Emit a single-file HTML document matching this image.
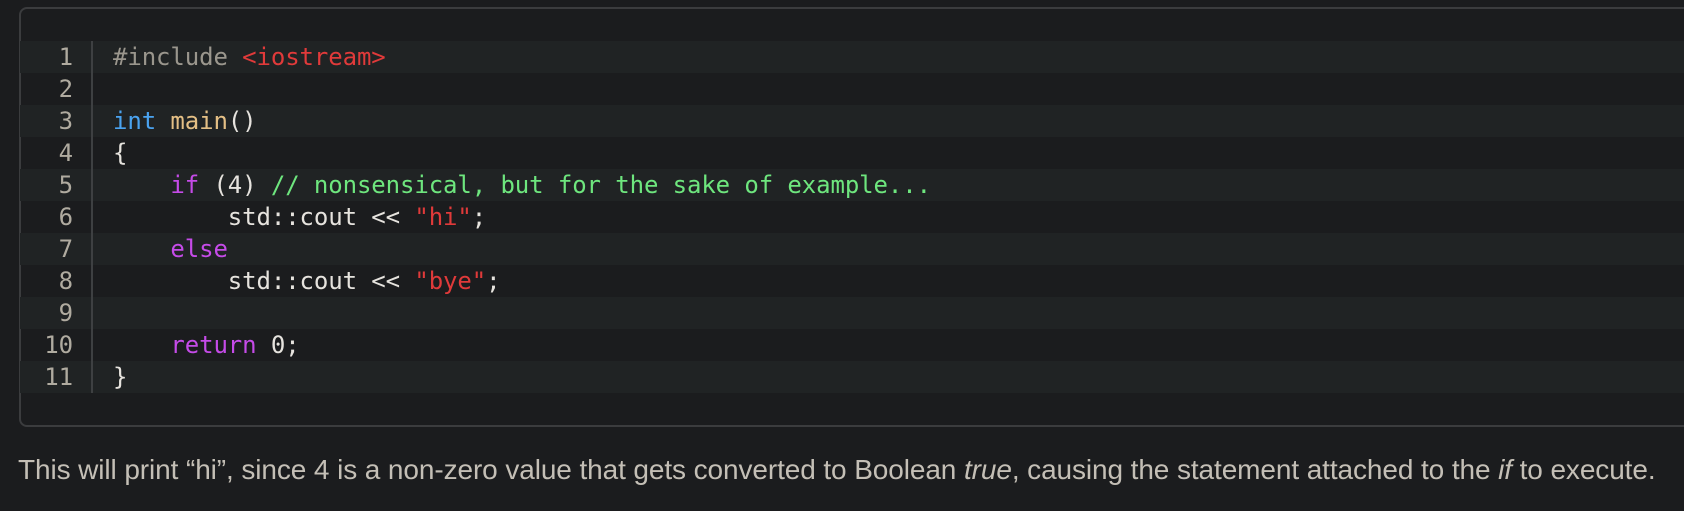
<!DOCTYPE html>
<html><head><style>
html,body{margin:0;padding:0;background:#1b1c1e;width:1684px;height:511px;overflow:hidden}
.box{position:absolute;left:19px;top:7px;width:1700px;height:420px;border:2px solid #3b3c3e;border-radius:8px;box-sizing:border-box;}
.rows{position:absolute;left:20px;top:41px;width:1664px}
.r{height:32px;position:relative;font-family:"DejaVu Sans Mono","Liberation Mono",monospace;font-size:24px;line-height:32px;color:#e6e3de;white-space:pre;letter-spacing:-0.1px}
.r:nth-child(odd){background:#202324}
.n{position:absolute;right:1611px;color:#b0aba0;text-align:right}
.c{position:absolute;left:93px}
.sep{position:absolute;left:91px;top:41px;width:2px;height:352px;background:#3e4042}
.pp{color:#9a968d}.str{color:#e03a3a}.kw{color:#4aa3f0}.fn{color:#e4bf85}.ctl{color:#c54be8}.cm{color:#6ee67e}
p{position:absolute;left:18px;top:454px;margin:0;font-family:"Liberation Sans",sans-serif;font-size:28px;color:#c4bfb6;white-space:nowrap;letter-spacing:-0.1px}
</style></head><body>
<div class="box"></div>
<div class="rows">
<div class="r"><span class="n">1</span><span class="c"><span class="pp">#include </span><span class="str">&lt;iostream&gt;</span></span></div>
<div class="r"><span class="n">2</span></div>
<div class="r"><span class="n">3</span><span class="c"><span class="kw">int</span> <span class="fn">main</span>()</span></div>
<div class="r"><span class="n">4</span><span class="c">{</span></div>
<div class="r"><span class="n">5</span><span class="c">    <span class="ctl">if</span> (4) <span class="cm">// nonsensical, but for the sake of example...</span></span></div>
<div class="r"><span class="n">6</span><span class="c">        std::cout &lt;&lt; <span class="str">"hi"</span>;</span></div>
<div class="r"><span class="n">7</span><span class="c">    <span class="ctl">else</span></span></div>
<div class="r"><span class="n">8</span><span class="c">        std::cout &lt;&lt; <span class="str">"bye"</span>;</span></div>
<div class="r"><span class="n">9</span></div>
<div class="r"><span class="n">10</span><span class="c">    <span class="ctl">return</span> 0;</span></div>
<div class="r"><span class="n">11</span><span class="c">}</span></div>
</div>
<div class="sep"></div>
<p>This will print “hi”, since 4 is a non-zero value that gets converted to Boolean <i>true</i>, causing the statement attached to the <i>if</i> to execute.</p>
</body></html>
